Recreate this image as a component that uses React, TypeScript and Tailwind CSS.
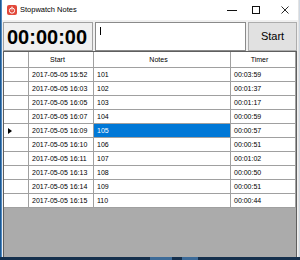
const ROWS = [
  { start: "2017-05-05 15:52", note: "101", timer: "00:03:59" },
  { start: "2017-05-05 16:03", note: "102", timer: "00:01:37" },
  { start: "2017-05-05 16:05", note: "103", timer: "00:01:17" },
  { start: "2017-05-05 16:07", note: "104", timer: "00:00:59" },
  { start: "2017-05-05 16:09", note: "105", timer: "00:00:57" },
  { start: "2017-05-05 16:10", note: "106", timer: "00:00:51" },
  { start: "2017-05-05 16:11", note: "107", timer: "00:01:02" },
  { start: "2017-05-05 16:13", note: "108", timer: "00:00:50" },
  { start: "2017-05-05 16:14", note: "109", timer: "00:00:51" },
  { start: "2017-05-05 16:15", note: "110", timer: "00:00:44" },
];

const SELECTED = 4;

function AppIcon() {
  return (
    <svg width="10" height="10" viewBox="0 0 10 10">
      <rect x="0" y="0" width="10" height="10" rx="2" fill="#e2483a" />
      <circle cx="5" cy="5.6" r="2.6" fill="none" stroke="#fff" strokeWidth="1" />
      <line x1="5" y1="1.6" x2="5" y2="3" stroke="#fff" strokeWidth="1" />
      <line x1="5" y1="5.6" x2="5" y2="4.2" stroke="#fff" strokeWidth="0.8" />
    </svg>
  );
}

function Cell({ w, children, className = "" }: { w: string; children?: React.ReactNode; className?: string }) {
  return (
    <div className={`${w} h-full shrink-0 border-r border-b border-[#a0a0a0] pl-[3px] overflow-hidden whitespace-nowrap ${className}`}>
      {children}
    </div>
  );
}

export default function App() {
  return (
    <div
      className="w-[300px] h-[260px] flex flex-col overflow-hidden bg-[#f0f0f0]"
      style={{ fontFamily: '"Liberation Sans", Arial, sans-serif' }}
    >
      <div className="flex h-[257px]">
        {/* desktop edge */}
        <div className="w-[1px] bg-[#1d5890]" />
        <div className="w-[1px] bg-[#4f89c2]" />

        {/* window */}
        <div className="flex-1 flex flex-col">
          {/* title bar */}
          <div className="h-[20px] bg-white flex items-center">
            <div className="ml-[5px]">
              <AppIcon />
            </div>
            <span className="ml-[3px] text-[7.5px] text-black">Stopwatch Notes</span>
            <div className="ml-auto flex items-center pr-[9px]">
              <svg width="10" height="10" viewBox="0 0 10 10">
                <line x1="0" y1="5.5" x2="10" y2="5.5" stroke="#111" strokeWidth="1" />
              </svg>
              <svg width="8" height="8" viewBox="0 0 8 8" className="ml-[15px]">
                <rect x="0.5" y="0.5" width="7" height="7" fill="none" stroke="#111" strokeWidth="1" />
              </svg>
              <svg width="8" height="8" viewBox="0 0 8 8" className="ml-[21px]">
                <path d="M0.5 0.5 L7.5 7.5 M7.5 0.5 L0.5 7.5" stroke="#111" strokeWidth="0.9" />
              </svg>
            </div>
          </div>

          {/* client area */}
          <div className="flex-1 flex flex-col pt-[2px]">
            <div className="h-[29px] flex pl-[1px] gap-[2px]">
              <div className="w-[90px] h-full border border-[#a0a0a0] flex items-center pl-[3px]">
                <span className="text-[20px] font-bold text-black leading-none">00:00:00</span>
              </div>
              <div className="w-[151px] h-full border border-[#8a8a8a] bg-white pl-[4px] pt-[4px]">
                <div className="w-[1px] h-[8px] bg-black" />
              </div>
              <div className="w-[49px] h-full border border-[#adadad] bg-[#e1e1e1] flex items-center justify-center">
                <span className="text-[11px] text-black">Start</span>
              </div>
            </div>

            {/* data grid */}
            <div className="flex-1 ml-[1px] w-[294px] border-t border-l border-r border-[#5f5f5f] bg-[#ababab] flex flex-col text-[7px] text-black">
              <div className="h-[16px] flex bg-white leading-[16px]">
                <Cell w="w-[25px]" />
                <Cell w="w-[65px]" className="text-center pr-[10px]">Start</Cell>
                <Cell w="w-[137px]" className="text-center pr-[10px]">Notes</Cell>
                <Cell w="w-[65px]" className="text-center pr-[10px]">Timer</Cell>
              </div>
              {ROWS.map((r, i) => (
                <div key={r.note} className="h-[14px] flex bg-white leading-[13px]">
                  <Cell w="w-[25px]" className="flex items-center">
                    {i === SELECTED && (
                      <svg width="4" height="6" viewBox="0 0 4 6" className="ml-[1px]">
                        <polygon points="0,0 4,3 0,6" fill="#000" />
                      </svg>
                    )}
                  </Cell>
                  <Cell w="w-[65px]">{r.start}</Cell>
                  <Cell w="w-[137px]" className={i === SELECTED ? "bg-[#0078d7] text-white" : ""}>
                    {r.note}
                  </Cell>
                  <Cell w="w-[65px]">{r.timer}</Cell>
                </div>
              ))}
            </div>
          </div>
        </div>

        {/* right edge */}
        <div className="w-[1px] bg-[#e4e4e4]" />
        <div className="w-[1px] bg-[#cfd8e2]" />
      </div>

      {/* taskbar */}
      <div className="h-[3px] bg-[#15304d] flex">
        <div className="ml-[150px] w-[22px] bg-[#3d6b98]" />
        <div className="ml-[10px] w-[16px] bg-[#3d6b98]" />
      </div>
    </div>
  );
}
